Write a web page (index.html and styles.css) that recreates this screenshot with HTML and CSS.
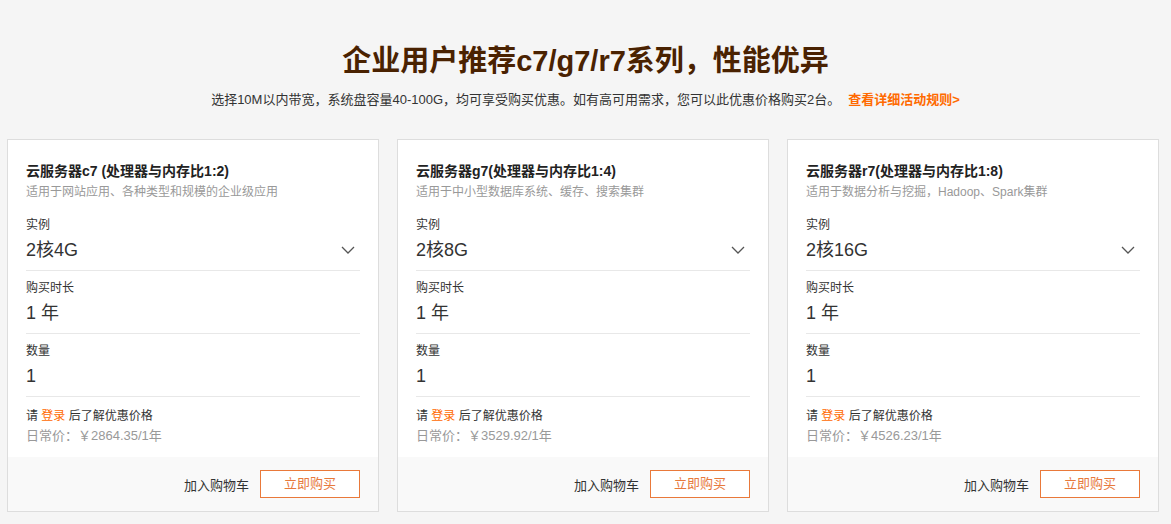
FILE: index.html
```html
<!DOCTYPE html>
<html>
<head>
	<title>企业用户推荐</title>
	<meta charset="utf-8">
	<link rel="stylesheet" href="styles.css">
</head>
<body>
<div class="head">
	<h1>企业用户推荐c7/g7/r7系列，性能优异</h1>
	<p>选择10M以内带宽，系统盘容量40-100G，均可享受购买优惠。如有高可用需求，您可以此优惠价格购买2台。<a href="#">查看详细活动规则&gt;</a></p>
</div>

<div class="cards">
	<!-- c7 -->
	<div class="card">
		<div class="card-body">
			<div class="title">云服务器c7 (处理器与内存比1:2)</div>
			<div class="desc">适用于网站应用、各种类型和规模的企业级应用</div>
			<div class="field">
				<div class="label">实例</div>
				<div class="value">2核4G<svg class="arrow" width="14" height="8" viewBox="0 0 14 8"><polyline points="1,1 7,7 13,1" fill="none" stroke="#555" stroke-width="1.3"/></svg></div>
			</div>
			<div class="field">
				<div class="label">购买时长</div>
				<div class="value">1 年</div>
			</div>
			<div class="field">
				<div class="label">数量</div>
				<div class="value">1</div>
			</div>
			<div class="tip">请 <a href="#">登录</a> 后了解优惠价格</div>
			<div class="price">日常价：￥2864.35/1年</div>
		</div>
		<div class="card-foot">
			<span class="cart">加入购物车</span>
			<a class="buy" href="#">立即购买</a>
		</div>
	</div>
	<!-- g7 -->
	<div class="card">
		<div class="card-body">
			<div class="title">云服务器g7(处理器与内存比1:4)</div>
			<div class="desc">适用于中小型数据库系统、缓存、搜索集群</div>
			<div class="field">
				<div class="label">实例</div>
				<div class="value">2核8G<svg class="arrow" width="14" height="8" viewBox="0 0 14 8"><polyline points="1,1 7,7 13,1" fill="none" stroke="#555" stroke-width="1.3"/></svg></div>
			</div>
			<div class="field">
				<div class="label">购买时长</div>
				<div class="value">1 年</div>
			</div>
			<div class="field">
				<div class="label">数量</div>
				<div class="value">1</div>
			</div>
			<div class="tip">请 <a href="#">登录</a> 后了解优惠价格</div>
			<div class="price">日常价：￥3529.92/1年</div>
		</div>
		<div class="card-foot">
			<span class="cart">加入购物车</span>
			<a class="buy" href="#">立即购买</a>
		</div>
	</div>
	<!-- r7 -->
	<div class="card">
		<div class="card-body">
			<div class="title">云服务器r7(处理器与内存比1:8)</div>
			<div class="desc">适用于数据分析与挖掘，Hadoop、Spark集群</div>
			<div class="field">
				<div class="label">实例</div>
				<div class="value">2核16G<svg class="arrow" width="14" height="8" viewBox="0 0 14 8"><polyline points="1,1 7,7 13,1" fill="none" stroke="#555" stroke-width="1.3"/></svg></div>
			</div>
			<div class="field">
				<div class="label">购买时长</div>
				<div class="value">1 年</div>
			</div>
			<div class="field">
				<div class="label">数量</div>
				<div class="value">1</div>
			</div>
			<div class="tip">请 <a href="#">登录</a> 后了解优惠价格</div>
			<div class="price">日常价：￥4526.23/1年</div>
		</div>
		<div class="card-foot">
			<span class="cart">加入购物车</span>
			<a class="buy" href="#">立即购买</a>
		</div>
	</div>
</div>
</body>
</html>
```

FILE: styles.css
```css
body {
	margin: 0;
	background-color: #f5f5f5;
	font-family: "Liberation Sans", "Noto Sans CJK SC", sans-serif;
	color: #333;
}
a {
	text-decoration: none;
}
.head {
	padding-top: 42px;
	text-align: center;
}
.head h1 {
	margin: 0;
	font-size: 29px;
	line-height: 38px;
	font-weight: 700;
	color: #4a2201;
}
.head p {
	margin: 10px 0 0;
	font-size: 13px;
	line-height: 20px;
	color: #333;
}
.head p a {
	margin-left: 8px;
	color: #ff6a00;
	font-weight: 700;
}

.cards {
	display: flex;
	gap: 18px;
	margin: 29px 0 0 7px;
}
.card {
	width: 370px;
	background-color: #fff;
	border: 1px solid #ddd;
}
.card-body {
	padding: 21px 18px 12px 18px;
}
.title {
	font-size: 14px;
	line-height: 20px;
	font-weight: 700;
	color: #222;
}
.desc {
	margin-top: 1px;
	font-size: 12px;
	line-height: 20px;
	color: #999;
}
.field {
	padding: 8px 0;
	border-bottom: 1px solid #e8e8e8;
}
.desc + .field {
	margin-top: 6px;
}
.label {
	font-size: 12px;
	line-height: 18px;
	color: #333;
}
.value {
	display: flex;
	justify-content: space-between;
	align-items: center;
	margin-top: 4px;
	font-size: 18px;
	line-height: 24px;
	color: #333;
}
.arrow {
	margin-right: 5px;
}
.tip {
	margin-top: 10px;
	font-size: 12px;
	line-height: 18px;
	color: #333;
}
.tip a {
	color: #ff6a00;
}
.price {
	margin-top: 2px;
	font-size: 13px;
	line-height: 18px;
	color: #999;
}
.card-foot {
	display: flex;
	justify-content: flex-end;
	align-items: center;
	gap: 11px;
	height: 54px;
	padding-right: 18px;
	background-color: #f9f9f9;
}
.cart {
	font-size: 13px;
	color: #333;
}
.buy {
	box-sizing: border-box;
	width: 100px;
	height: 28px;
	line-height: 26px;
	text-align: center;
	font-size: 13px;
	color: #e7793c;
	border: 1px solid #e9793a;
	background-color: #fff;
}
```
